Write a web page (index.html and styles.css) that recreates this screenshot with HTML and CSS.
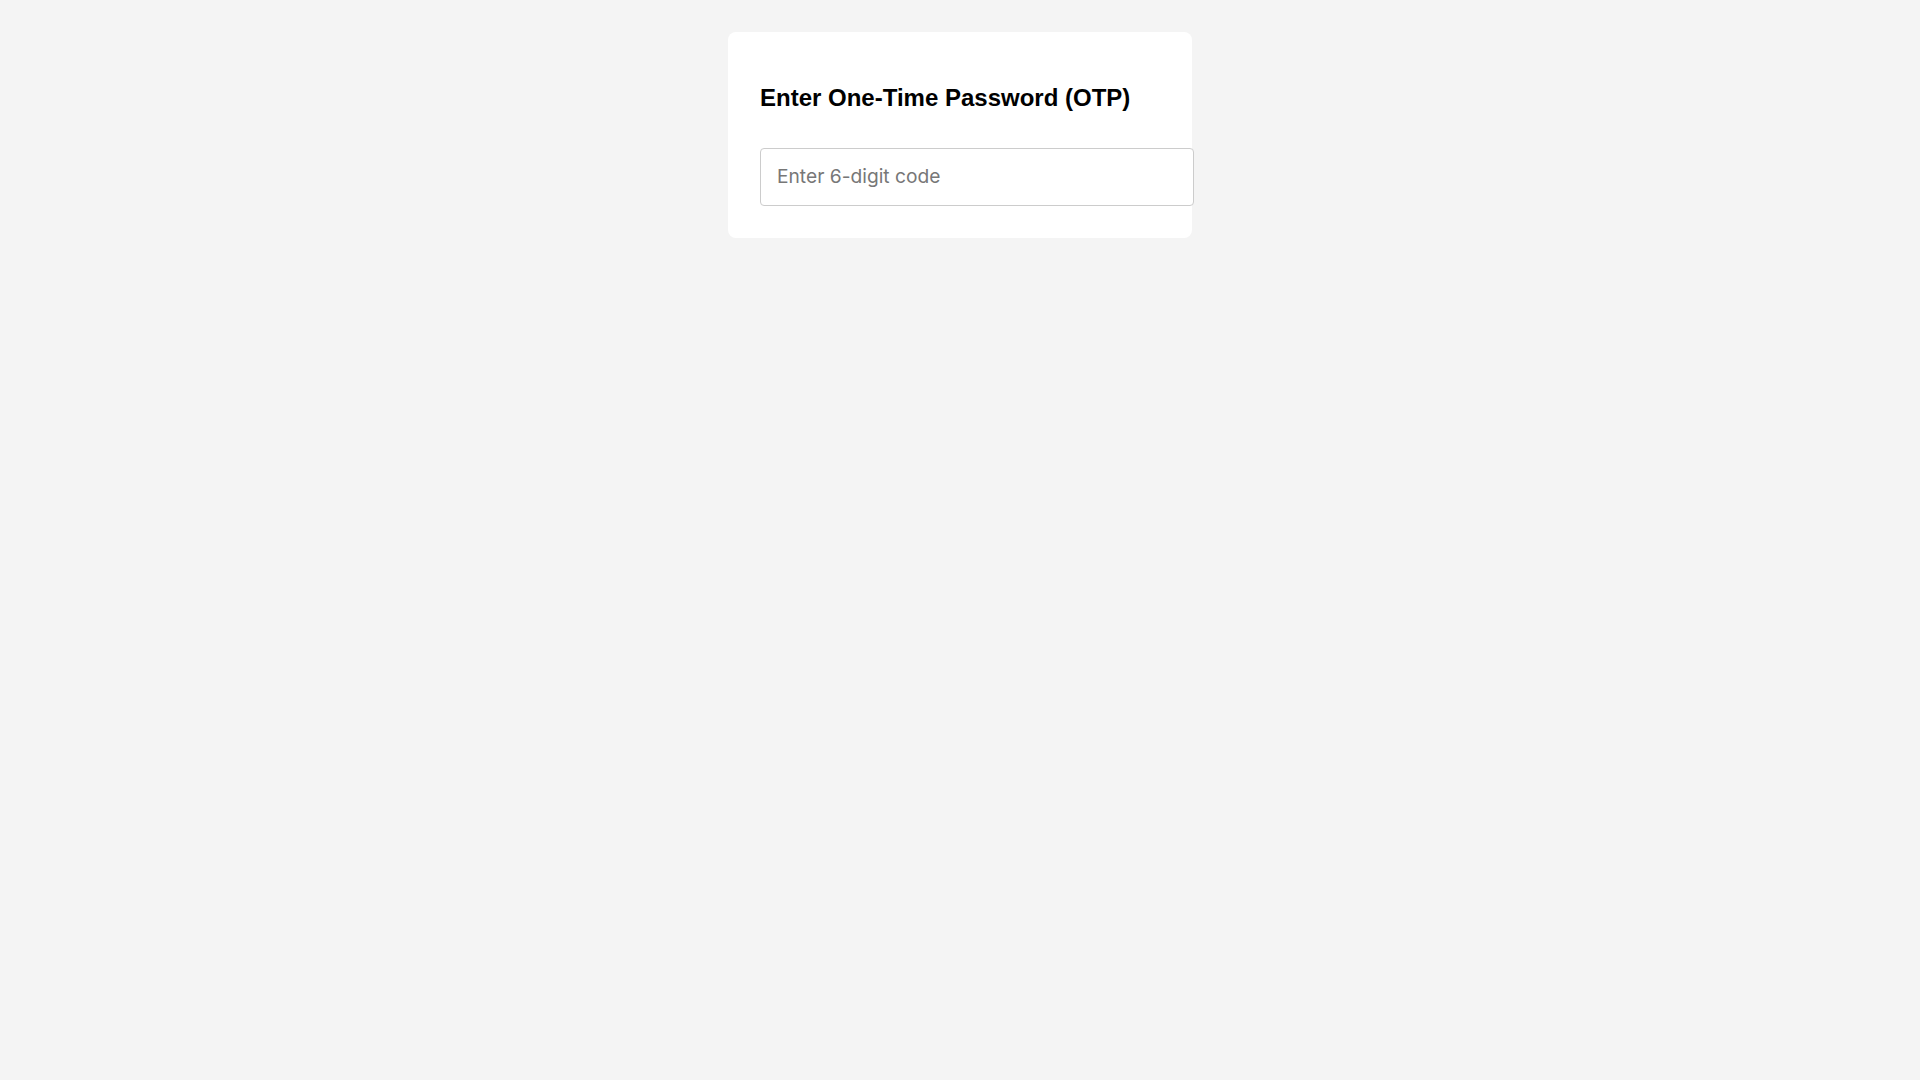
FILE: index.html
```html
<!DOCTYPE html>
<html lang="en">
<head>
<meta charset="utf-8">
<title>Enter OTP</title>
<link rel="stylesheet" href="styles.css">
</head>
<body>
<main class="page">
  <section class="card">
    <h2 class="title">Enter One-Time Password (OTP)</h2>
    <form class="otp-form">
      <input class="otp-input" type="text" inputmode="numeric" maxlength="6" placeholder="Enter 6-digit code">
    </form>
  </section>
</main>
</body>
</html>
```

FILE: styles.css
```css
html, body {
  margin: 0;
  padding: 0;
  background: #f4f4f4;
}
.page {
  display: flex;
  justify-content: center;
  padding-top: 32px;
}
.card {
  width: 400px;
  padding: 32px;
  background: #ffffff;
  border-radius: 8px;
}
.title {
  margin: 19.92px 0 36.5px;
  font-family: "Liberation Sans", Arial, sans-serif;
  font-size: 24px;
  font-weight: bold;
  color: #000;
}
.otp-form {
  margin: 0;
}
.otp-input {
  display: block;
  width: 100%;
  padding: 16px;
  font-family: Inter, "Noto Sans", sans-serif;
  font-size: 19.2px;
  line-height: 23.5px;
  color: #222;
  border: 1px solid #cccccc;
  border-radius: 4px;
  background: #fff;
  outline: none;
}
.otp-input::placeholder {
  color: #777777;
}
```
